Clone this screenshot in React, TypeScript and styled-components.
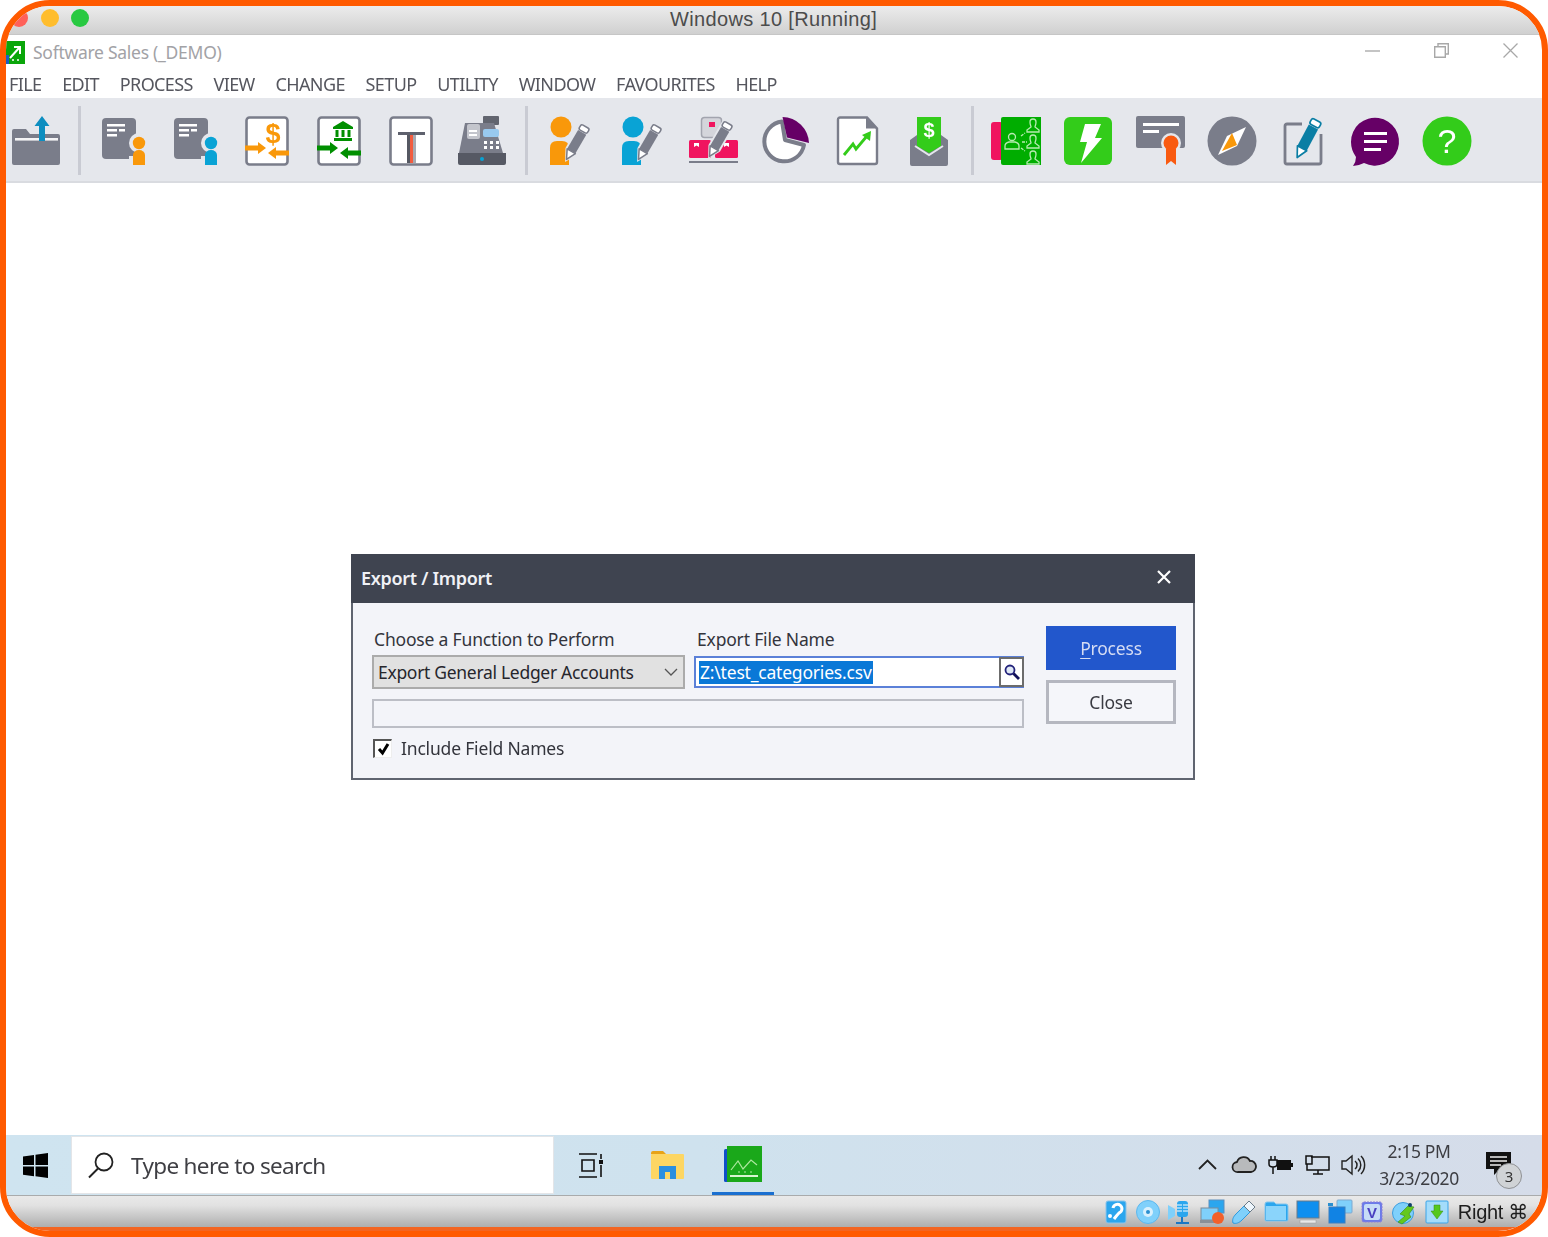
import React from 'react';
import styled, { createGlobalStyle } from 'styled-components';

const GRAY = '#7a7d8a';
const ORANGE = '#f9980a';
const BLUE = '#09a3d5';
const PINK = '#f0145f';
const GREEN = '#33cc1a';
const DGREEN = '#008f00';
const PURPLE = '#660066';
const TB = '#e5e7ec';

const Global = createGlobalStyle`
  html, body { margin: 0; padding: 0; background: #fff; }
  * { box-sizing: border-box; }
  body { font-family: "Noto Sans", "Open Sans", sans-serif; }
`;

const Frame = styled.div`
  width: 1548px; height: 1237px;
  border: 6px solid #ff5a00;
  border-radius: 50px;
  overflow: hidden;
  display: flex; flex-direction: column;
  background: #fff;
  filter: blur(.45px);
`;
const HostBar = styled.div`
  height: 29px; flex: none;
  display: grid; grid-template-columns: 1fr auto 1fr;
  align-items: center;
  padding: 0 5px 0 4px;
  background: linear-gradient(#ececec, #d0d0d0);
  border-bottom: 1px solid #c6c6c6;
`;
const Lights = styled.div`display: flex; gap: 12.5px; margin-top: -4px;`;
const Light = styled.span<{ $c: string }>`
  width: 18px; height: 18px; border-radius: 50%; background: ${p => p.$c};
`;
const HostTitle = styled.div`
  font: 20px "Liberation Sans", Arial, sans-serif;
  color: #4c4c4c; margin-top: -1px; letter-spacing: .35px;
`;
const AppBar = styled.div`
  height: 32px; flex: none; display: flex; align-items: center;
  padding: 2px 24px 0 0;
`;
const AppTitle = styled.div`
  font-size: 17.5px; color: #a2a2a6; margin-left: 8px; letter-spacing: -.27px; flex: 1;
`;
const WinControls = styled.div`display: flex; gap: 54px; margin-top: -4px; align-items: center;`;
const Menu = styled.nav`
  height: 31px; flex: none; display: flex; align-items: center; gap: 20.8px; padding: 3px 0 0 3px;
`;
const MenuItem = styled.span`
  font-size: 18px; color: #55565e; letter-spacing: -.62px;
`;
const Toolbar = styled.div`
  height: 85px; flex: none; display: flex; align-items: center;
  background: ${TB};
  border-bottom: 2px solid #d9dbe0;
`;
const ToolRow = styled.div`display: flex; align-items: center; margin-left: -6px;`;
const ToolSlot = styled.div`
  width: 71.7px; height: 50px; display: flex; justify-content: center; margin-top: 3px;
`;
const ToolSep = styled.div`
  width: 16.3px; height: 69px; display: flex; justify-content: center; margin-top: 2px;
  &::before { content: ''; width: 3px; background: #c9cbd3; }
`;
const Main = styled.main`
  flex: 1; min-height: 0; padding: 371px 2px 0 0; background: #fff;
`;
const Dialog = styled.section`
  width: 844px; height: 226px; margin: 0 auto;
  border: 2px solid #5f6470; border-top: 0;
  background: #f3f4f9;
  display: flex; flex-direction: column;
`;
const DialogHead = styled.header`
  height: 49px; margin: 0 -2px; flex: none; background: #3f4450;
  display: flex; align-items: center; justify-content: space-between;
  padding: 0 24px 4px 10px;
`;
const DialogTitle = styled.h1`
  margin: 3px 0 0; font-size: 18px; font-weight: 600; color: #f0f1f5; letter-spacing: -.3px;
`;
const DialogBody = styled.div`
  flex: 1; display: grid; grid-template-columns: 652px 130px; column-gap: 22px;
  padding: 23px 0 0 19px;
`;
const FormCol = styled.div`display: flex; flex-direction: column; padding-top: 1px;`;
const LabelRow = styled.div`display: grid; grid-template-columns: 323px 1fr; padding-left: 2px; height: 28px;`;
const Label = styled.label`
  font-size: 17.5px; color: #33343c; letter-spacing: -.18px; line-height: 24px;
`;
const FieldRow = styled.div`display: flex; gap: 9px; height: 34px;`;
const SelectBox = styled.div`
  width: 313px; border: 2px solid #ababab; background: #e1e1e1;
  display: flex; align-items: center; justify-content: space-between;
  padding: 0 5px 0 4px; font-size: 17.5px; color: #26262c; letter-spacing: -.3px;
`;
const FileInput = styled.div`
  flex: 1; border: 2px solid #5b80d8; background: #fff; display: flex; align-items: stretch;
  height: 32px; margin-top: 1px; padding-left: 3px;
`;
const InputText = styled.div`flex: 1; display: flex; align-items: center;`;
const Selected = styled.span`
  background: #0a78d7; color: #fff; font-size: 17.5px; letter-spacing: -.2px;
  height: 23px; line-height: 23px; padding: 0 1px;
`;
const SearchBtn = styled.div`
  width: 25px; margin: -1px -2px -1px 0; border: 2px solid #6c6c6c; background: #fff;
  display: flex; align-items: center; justify-content: center;
`;
const BlankField = styled.div`
  height: 29px; margin-top: 10px; border: 2px solid #bcbec6; background: #f3f4f9;
`;
const CheckRow = styled.div`display: flex; align-items: center; gap: 9px; margin-top: 8px; padding-left: 1px;`;
const CheckBox = styled.div`
  width: 19px; height: 19px; background: #fff;
  border-top: 2px solid #555; border-left: 2px solid #555;
  border-right: 1px solid #eee; border-bottom: 1px solid #eee;
  display: flex; align-items: center; justify-content: center;
`;
const ButtonCol = styled.div`display: flex; flex-direction: column; gap: 10px;`;
const Btn = styled.button<{ $primary?: boolean }>`
  height: 44px; padding: 0; font-family: inherit; font-size: 17.5px; letter-spacing: -.2px;
  background: ${p => (p.$primary ? '#2257cc' : '#f5f6fa')};
  color: ${p => (p.$primary ? '#d5dcf3' : '#3a3b42')};
  border: ${p => (p.$primary ? '0' : '3px solid #b5b7c0')};
  u { text-underline-offset: 3px; }
`;
const Taskbar = styled.footer`
  height: 61px; flex: none; display: flex; align-items: stretch;
  background: linear-gradient(90deg, #cfe4f0, #cfe2ee 45%, #d5dce9);
  border-bottom: 1px solid #a9abac;
`;
const StartBtn = styled.div`
  width: 65px; display: flex; align-items: center; justify-content: center; padding-right: 6px;
`;
const SearchBox = styled.div`
  width: 483px; margin: 1px 0; background: #fff; display: flex; align-items: center;
  padding-left: 16px; gap: 17px; border: 1px solid #e3e5e8;
`;
const SearchText = styled.span`font-size: 22.5px; color: #3f3f44; letter-spacing: -.66px; margin-top: 1px;`;
const Apps = styled.div`display: flex; align-items: stretch; margin-left: -1px;`;
const AppBtn = styled.div<{ $active?: boolean }>`
  width: 76px; display: flex; align-items: center; justify-content: center;
  position: relative;
  ${p => p.$active && `
    &::after { content: ''; position: absolute; left: 7px; right: 7px; bottom: 0; height: 3px; background: #1a6fd0; }
  `}
`;
const Tray = styled.div`
  margin-left: auto; display: flex; align-items: center; padding-right: 30px;
`;
const TrayIcons = styled.div`display: flex; align-items: center; gap: 11.5px; margin-top: -1px;`;
const TrayChevron = styled.svg`display: block; flex: none; margin-right: 3px;`;
const Clock = styled.div`
  width: 93px; margin-left: 6.5px; text-align: center; color: #3c3d42; font-size: 17.5px;
  letter-spacing: -.4px; line-height: 27px; margin-top: -1px;
`;
const Notify = styled.div`position: relative; width: 26px; height: 23px; margin-left: 20.5px; margin-top: -4px;`;
const Badge = styled.span`
  position: absolute; left: 10px; top: 11px; width: 26px; height: 26px; border-radius: 50%;
  background: #d0d3d6; border: 1.5px solid #8f9194; color: #333; font-size: 15px;
  display: flex; align-items: center; justify-content: center;
`;
const HostStatus = styled.div`
  height: 31px; flex: none; display: flex; align-items: center; justify-content: flex-end;
  gap: 9px; padding-right: 14px;
  background: linear-gradient(#e9e9e9, #e2e2e2 30%, #aeaeae);
`;
const StatusLabel = styled.span`
  font: 20px "Liberation Sans", "DejaVu Sans", sans-serif; color: #1e1e1e; white-space: nowrap; letter-spacing: -.3px;
`;
const StatusIcons = styled.div`display: flex; gap: 8px; align-items: center;`;
const BottomBand = styled.div`height: 4px; flex: none; background: #f26522;`;

const I = styled.svg`display: block; flex: none; overflow: visible;`;
const SvgText = styled.text<{ $light?: boolean }>`
  font-family: "Liberation Sans", Arial, sans-serif;
  font-weight: ${p => (p.$light ? 400 : 700)};
`;

const Ico = ({ children }: { children: React.ReactNode }) => (
  <I width={50} height={50} viewBox="0 0 50 50">{children}</I>
);

const Pencil = ({ t, body = GRAY, halo = TB }: { t: string; body?: string; halo?: string }) => (
  <g transform={t}>
    <path d="M-7-22h14v32l-7 13-7-13z" fill={halo} />
    <rect x={-5} y={-20} width={10} height={6} rx={2} fill="#fff" stroke={body} strokeWidth={1.6} />
    <rect x={-5} y={-13} width={10} height={23} fill={body} />
    <path d="M-5 10h10l-5 10z" fill="#fff" stroke={body} strokeWidth={1.6} strokeLinejoin="round" />
  </g>
);

const DocPerson = ({ c }: { c: string }) => (
  <Ico>
    <rect x={3} y={2} width={34} height={41} rx={4} fill={GRAY} />
    <path d="M8 8h18v2.5H8zM8 13h10v2.5H8zM20 13h6v2.5h-6zM8 18h10v2.5H8z" fill="#fff" />
    <circle cx={40} cy={27} r={10} fill={TB} />
    <path d="M30 50V40h20v10z" fill={TB} />
    <circle cx={40} cy={27} r={6.2} fill={c} />
    <path d="M34 49V39a6 5 0 0 1 12 0v10z" fill={c} />
  </Ico>
);
const Arrow = ({ x, y, dir, c }: { x: number; y: number; dir: 1 | -1; c: string }) => (
  <path fill={c} transform={`translate(${x} ${y}) scale(${dir} 1)`} d="M0-2.5h13V-6l8 6-8 6v-3.5H0z" />
);
const Box = () => <rect x={4.5} y={1.5} width={41} height={47} rx={3} fill="#fff" stroke={GRAY} strokeWidth={2.6} />;

const tools: React.ReactNode[] = [
  <Ico key="a">
    <path d="M1 15a2 2 0 0 1 2-2h12l4 5h28a2 2 0 0 1 2 2v27a2 2 0 0 1-2 2H3a2 2 0 0 1-2-2z" fill={GRAY} />
    <rect x={4} y={22} width={43} height={2.6} fill="#f4f4f6" />
    <path d="M31 0l7.500 10H34v15h-6V10h-4.500z" fill="#0d8ec0" />
  </Ico>,
  null,
  <DocPerson key="b" c={ORANGE} />,
  <DocPerson key="c" c={BLUE} />,
  <Ico key="d">
    <Box />
    <SvgText x={31} y={27} textAnchor="middle" fontSize={27} fill={ORANGE}>$</SvgText>
    <Arrow x={3} y={32} dir={1} c={ORANGE} />
    <Arrow x={47} y={37} dir={-1} c={ORANGE} />
  </Ico>,
  <Ico key="e">
    <Box />
    <path transform="translate(2 1)" d="M27 4l10 6v2H17v-2zM18 21h18v3H18zM19.500 13h3v7h-3zM25.500 13h3v7h-3zM31.500 13h3v7h-3z" fill={DGREEN} />
    <Arrow x={3} y={32} dir={1} c={DGREEN} />
    <Arrow x={47} y={37} dir={-1} c={DGREEN} />
  </Ico>,
  <Ico key="f">
    <Box />
    <rect x={12} y={16} width={27} height={3} fill="#5e616d" />
    <rect x={21} y={19} width={3} height={28} fill="#555862" />
    <rect x={24} y={19} width={3} height={28} fill="#f25c3f" />
    <rect x={27} y={19} width={3} height={28} fill="#a8aab2" />
  </Ico>,
  <Ico key="g">
    <rect x={26} y={0} width={16} height={9} rx={1} fill="#62656f" />
    <path d="M8 7h29l9 30H2z" fill={GRAY} />
    <rect x={10} y={8} width={13} height={15} rx={2} fill="#c3c5cc" />
    <rect x={12} y={14} width={8} height={2} fill="#fff" />
    <rect x={12} y={18} width={8} height={2} fill="#fff" />
    <rect x={26} y={13} width={16} height={8} rx={2} fill="#98c9ef" />
    <path d="M27 25h3v3h-3zM33 25h3v3h-3zM39 25h3v3h-3zM27 30h3v3h-3zM33 30h3v3h-3zM39 30h3v3h-3z" fill="#fff" />
    <path d="M1 37h48v10a2 2 0 0 1-2 2H3a2 2 0 0 1-2-2z" fill="#565964" />
    <circle cx={25} cy={43} r={2} fill={BLUE} />
  </Ico>,
  null,
  ...[ORANGE, BLUE].map(c => (
    <Ico key={c}>
      <circle cx={16} cy={11} r={10.5} fill={c} />
      <path d="M5 49V32q0-7 7-7h5q7 0 7 7v17z" fill={c} />
      <Pencil t="translate(31 27) rotate(30) scale(.95)" />
    </Ico>
  )),
  <Ico key="i">
    <rect x={12.500} y={1.500} width={20} height={20} rx={3} fill="#d4d5db" stroke="#a2a4ae" strokeWidth={1.5} />
    <rect x={20} y={6} width={6} height={5} fill={PINK} />
    <rect x={0} y={24} width={22} height={18} rx={1.5} fill={PINK} />
    <rect x={26} y={24} width={23} height={18} rx={1.5} fill={PINK} />
    <path d="M5 27h5v4l-2.500-1.500L5 31zM35 27h5v4l-2.500-1.500L35 31z" fill="#fff" />
    <rect x={0} y={45} width={49} height={2} fill={GRAY} />
    <Pencil t="translate(30 24) rotate(30) scale(.95)" />
  </Ico>,
  <Ico key="j">
    <path d="M22 5.500A20 20 0 1 0 44 29L25 24z" fill="#fff" stroke={GRAY} strokeWidth={4} strokeLinejoin="round" />
    <path d="M22.500 1A27 27 0 0 1 49 27L27 21.500z" fill={PURPLE} />
  </Ico>,
  <Ico key="k">
    <path d="M8 1.500h27l10 11V46a2 2 0 0 1-2 2H8a2 2 0 0 1-2-2V3.500a2 2 0 0 1 2-2z" fill="#fff" stroke={GRAY} strokeWidth={2.4} />
    <path d="M34 1.500l11 11H34z" fill={GRAY} />
    <path d="M12 39l9-11 3 5 11-13" fill="none" stroke={GREEN} strokeWidth={2.800} />
    <path d="M39 15l-1 10-8-6z" fill={GREEN} />
  </Ico>,
  <Ico key="l">
    <path d="M6 24l7-5v-3h24v3l7 5v24a2 2 0 0 1-2 2H8a2 2 0 0 1-2-2z" fill={GRAY} />
    <path d="M13 1h24v29L25 37 13 30z" fill={GREEN} />
    <path d="M11 30l14 9 14-9" fill="none" stroke={TB} strokeWidth={2} />
    <SvgText x={25} y={21} textAnchor="middle" fontSize={20} fill="#fff">$</SvgText>
  </Ico>,
  null,
  <Ico key="m">
    <rect x={-1} y={6} width={12} height={38} rx={3} fill={PINK} />
    <path d="M9 3a2 2 0 0 1 2-2h38v48H11a2 2 0 0 1-2-2z" fill="#00ad00" />
    <g fill="none" stroke="#b6ebb0" strokeWidth={1.300}>
      <circle cx={20} cy={21} r={3.500} />
      <path d="M13 33v-3q0-3 4-4h6q4 1 4 4v3z" />
      <path d="M30 26h5M29 20l4-3M29 32l4 3" strokeDasharray="3 1" />
      <path d="M41 3a3 3 0 0 1 3 3c0 3-1 4-1 5l4 3v2h-12v-2l4-3c0-1-1-2-1-5a3 3 0 0 1 3-3z" />
      <path d="M41 19a3 3 0 0 1 3 3c0 3-1 4-1 5l4 3v2h-12v-2l4-3c0-1-1-2-1-5a3 3 0 0 1 3-3z" />
      <path d="M41 35a3 3 0 0 1 3 3c0 3-1 4-1 5l4 3v2h-12v-2l4-3c0-1-1-2-1-5a3 3 0 0 1 3-3z" />
    </g>
  </Ico>,
  <Ico key="n">
    <rect x={1} y={1} width={48} height={48} rx={6} fill={GREEN} />
    <path d="M22 8h16l-6 14h7L18 47l6-21h-7z" fill="#fff" />
  </Ico>,
  <Ico key="o">
    <rect x={1} y={0} width={49} height={32} rx={2} fill={GRAY} />
    <path d="M8 7h36v3H8zM8 14h16v3H8z" fill="#fff" />
    <circle cx={36} cy={27} r={10} fill={TB} />
    <circle cx={36} cy={27} r={7.500} fill="#f95a10" />
    <path d="M31 33h10v16l-5-4-5 4z" fill="#f95a10" />
  </Ico>,
  <Ico key="p">
    <circle cx={25} cy={25} r={24.500} fill={GRAY} />
    <path d="M39 11L30 30 11 39l9-19z" fill="#fff" />
    <path d="M25 17l5 12-15 6z" fill={ORANGE} />
  </Ico>,
  <Ico key="q">
    <path d="M24 8H9a2 2 0 0 0-2 2v36a2 2 0 0 0 2 2h32a2 2 0 0 0 2-2V18" fill="none" stroke={GRAY} strokeWidth={2.800} />
    <Pencil t="translate(29 23) rotate(28) scale(1.05)" body="#0a7ea4" />
  </Ico>,
  <Ico key="r">
    <path d="M1 26a24 24 0 1 1 13 21q-6 3-11 3 3-4 3-9-5-7-5-15z" fill={PURPLE} />
    <path d="M14 16h23v3H14zM14 24h23v3H14zM14 32h17v3H14z" fill="#fff" />
  </Ico>,
  <Ico key="s">
    <circle cx={25} cy={25} r={24.500} fill={GREEN} />
    <SvgText $light x={25} y={37} textAnchor="middle" fontSize={34} fill="#fff">?</SvgText>
  </Ico>,
];

const menuItems = ['FILE', 'EDIT', 'PROCESS', 'VIEW', 'CHANGE', 'SETUP', 'UTILITY', 'WINDOW', 'FAVOURITES', 'HELP'];

const S = ({ children, w = 24 }: { children: React.ReactNode; w?: number }) => (
  <I width={w} height={24} viewBox={`0 0 ${w} 24`}>{children}</I>
);
const LB = '#2ba6ee';
const LBF = '#7fd0fb';
const statusIcons = [
  <S key="1"><rect x={2} y={1} width={20} height={22} rx={2} fill={LB} stroke="#8cc4ea" /><path d="M9 8a4.500 4.500 0 1 1 6 5q-2 2-5 6" fill="none" stroke="#fff" strokeWidth={3} /><circle cx={6} cy={16} r={2} fill="#fff" /></S>,
  <S key="2"><circle cx={12} cy={12} r={11.500} fill={LBF} stroke="#5db8ee" /><circle cx={12} cy={12} r={5} fill="#d9f0fd" /><circle cx={12} cy={12} r={2} fill="#2b8fd0" /></S>,
  <S key="3"><path d="M0 5l7 4v7l-7 4z" fill={LBF} /><rect x={9} y={1} width={11} height={16} rx={3} fill={LB} /><path d="M9 5h5M9 8h5M9 11h5M15 5h5M15 8h5M15 11h5" stroke="#fff" /><path d="M14 17v5M8 23h13" stroke="#1c77c4" strokeWidth={2} /></S>,
  <S key="4"><rect x={9} y={0} width={15} height={13} fill={LB} stroke="#5a8fc0" /><rect x={1} y={8} width={17} height={12} fill={LBF} stroke="#7c8c9a" /><rect x={0} y={20} width={19} height={3} fill="#8a9096" /><circle cx={18} cy={18} r={6} fill="#f2602a" /></S>,
  <S key="5"><path d="M1 23c-1-3 0-6 3-9l8-8 6 6-8 8c-3 3-6 4-9 3z" fill={LBF} stroke="#2b9ae0" /><path d="M12 6l5-5 6 6-5 5z" fill="#eef6fc" stroke="#6a7a88" /></S>,
  <S key="6"><path d="M1 4a2 2 0 0 1 2-2h7l2 2h10a2 2 0 0 1 2 2v14a1 1 0 0 1-1 1H2a1 1 0 0 1-1-1z" fill={LB} stroke="#85c6ee" /><rect x={2} y={6} width={20} height={14} fill="#8ad4fb" /></S>,
  <S key="7"><rect x={1} y={1} width={22} height={17} fill="#0f8fef" stroke="#6b7a88" /><rect x={4} y={20} width={16} height={3} fill="#e8e8e8" stroke="#999" strokeWidth={.5} /></S>,
  <S key="8"><rect x={9} y={0} width={15} height={13} rx={1} fill={LBF} stroke="#7fa9d0" /><rect x={1} y={7} width={16} height={16} fill="#1183e4" stroke="#3a7fc0" /><rect x={0} y={3} width={5} height={3} fill="#2b8fd0" /></S>,
  <S key="9"><rect x={2} y={2} width={20} height={20} rx={2} fill="#6a7bea" stroke="#8c7fd8" strokeDasharray="2 1" /><rect x={4} y={4} width={16} height={16} rx={2} fill="#c7dcf7" /><SvgText x={12} y={18} textAnchor="middle" fontSize={15} fill="#4a3fc0">V</SvgText></S>,
  <S key="10" w={25}><circle cx={11} cy={13} r={10.500} fill={LBF} stroke="#3e9ee0" /><path d="M8 14l8-8 6 1-5 7 2 3-9 7-4-2 7-6z" fill="#64c81e" stroke="#3a8a10" strokeWidth={.6} /><circle cx={18} cy={5} r={2} fill="#10406a" /></S>,
  <S key="11"><rect x={1} y={1} width={22} height={22} rx={1} fill="#a4dcfb" stroke="#3aa4e8" /><path d="M9 5h6v6h3l-6 8-6-8h3z" fill="#55c81e" stroke="#3a8a10" strokeWidth={.5} /></S>,
];

export default function App() {
  let sepKey = 0;
  return (
    <>
      <Global />
      <Frame>
        <HostBar>
          <Lights>
            <Light $c="#ff6159" />
            <Light $c="#ffbd2e" />
            <Light $c="#28c941" />
          </Lights>
          <HostTitle>Windows 10 [Running]</HostTitle>
          <span />
        </HostBar>
        <AppBar>
          <I width={19} height={23} viewBox="0 0 19 23">
            <rect width={19} height={23} fill="#0aa60a" />
            <rect y={14} width={3} height={9} fill="#1b5fc0" />
            <path d="M4 17L13 7M8 6h6v7" fill="none" stroke="#fff" strokeWidth={2} />
            <path d="M6 19h2M11 19h2" stroke="#fff" strokeWidth={1.500} />
          </I>
          <AppTitle>Software Sales (_DEMO)</AppTitle>
          <WinControls>
            <I width={15} height={15} viewBox="0 0 15 15"><path d="M0 8h15" stroke="#b0b0b0" strokeWidth={1.500} /></I>
            <I width={15} height={15} viewBox="0 0 15 15"><path d="M4 3V.7h10.300V11H12M.7 3.700h10.600V14.300H.7z" fill="none" stroke="#a8a8a8" strokeWidth={1.400} /></I>
            <I width={15} height={15} viewBox="0 0 15 15"><path d="M.5.5l14 14M14.500.5l-14 14" stroke="#a8a8a8" strokeWidth={1.300} /></I>
          </WinControls>
        </AppBar>
        <Menu>{menuItems.map(m => <MenuItem key={m}>{m}</MenuItem>)}</Menu>
        <Toolbar>
          <ToolRow>
            {tools.map(t => t
              ? <ToolSlot key={(t as React.ReactElement).key}>{t}</ToolSlot>
              : <ToolSep key={`sep${sepKey++}`} />)}
          </ToolRow>
        </Toolbar>
        <Main>
          <Dialog>
            <DialogHead>
              <DialogTitle>Export / Import</DialogTitle>
              <I width={14} height={14} viewBox="0 0 14 14"><path d="M1 1l12 12M13 1L1 13" stroke="#fff" strokeWidth={2.200} /></I>
            </DialogHead>
            <DialogBody>
              <FormCol>
                <LabelRow>
                  <Label>Choose a Function to Perform</Label>
                  <Label>Export File Name</Label>
                </LabelRow>
                <FieldRow>
                  <SelectBox>
                    Export General Ledger Accounts
                    <I width={14} height={8} viewBox="0 0 14 8"><path d="M1 1l6 6 6-6" fill="none" stroke="#555" strokeWidth={1.300} /></I>
                  </SelectBox>
                  <FileInput>
                    <InputText><Selected>Z:\test_categories.csv</Selected></InputText>
                    <SearchBtn>
                      <I width={16} height={16} viewBox="0 0 16 16">
                        <circle cx={6} cy={6} r={4.500} fill="#dfe8f5" stroke="#22227a" strokeWidth={1.800} />
                        <path d="M9.500 9.500L15 15" stroke="#11115a" strokeWidth={2.800} />
                      </I>
                    </SearchBtn>
                  </FileInput>
                </FieldRow>
                <BlankField />
                <CheckRow>
                  <CheckBox>
                    <I width={13} height={12} viewBox="0 0 13 12"><path d="M2 6l3.500 4L11 1" fill="none" stroke="#000" strokeWidth={3} /></I>
                  </CheckBox>
                  <Label>Include Field Names</Label>
                </CheckRow>
              </FormCol>
              <ButtonCol>
                <Btn $primary><u>P</u>rocess</Btn>
                <Btn>Close</Btn>
              </ButtonCol>
            </DialogBody>
          </Dialog>
        </Main>
        <Taskbar>
          <StartBtn>
            <I width={25} height={25} viewBox="0 0 25 25">
              <path d="M0 3.500l11-1.500v10H0zM12.500 1.800L25 0v12H12.500zM0 13.500h11v9.800L0 21.800zM12.500 13.500H25V25l-12.500-1.700z" fill="#000" />
            </I>
          </StartBtn>
          <SearchBox>
            <I width={26} height={26} viewBox="0 0 26 26">
              <circle cx={16} cy={10} r={8.500} fill="none" stroke="#222" strokeWidth={1.800} />
              <path d="M10 16.500L1 25.500" stroke="#222" strokeWidth={2} />
            </I>
            <SearchText>Type here to search</SearchText>
          </SearchBox>
          <Apps>
            <AppBtn>
              <I width={26} height={25} viewBox="0 0 26 25">
                <path d="M1 1h18M1 24h18M4 7h12v11H4zM23 1v5M23 12v12" fill="none" stroke="#111" strokeWidth={1.600} />
                <rect x={21} y={7} width={4} height={4} fill="#111" />
              </I>
            </AppBtn>
            <AppBtn>
              <I width={33} height={28} viewBox="0 0 33 28">
                <path d="M0 2a2 2 0 0 1 2-2h10l3 3h-15z" fill="#e8a317" />
                <rect y={3} width={33} height={25} rx={1} fill="#fdd663" />
                <path d="M8 28V15h17v13h-6v-7h-5v7z" fill="#2b8fe0" />
              </I>
            </AppBtn>
            <AppBtn $active>
              <I width={38} height={38} viewBox="0 0 38 38">
                <rect x={0} y={3} width={6} height={33} rx={1.500} fill="#1050c8" />
                <rect x={3} y={0} width={35} height={36} fill="#1aa81a" />
                <path d="M7 24l7-9 5 8 8-9 6 5" fill="none" stroke="#aee8a0" strokeWidth={1.200} />
                <path d="M6 30h28" stroke="#d8f5d0" strokeWidth={2} />
                <path d="M14 26h2M20 26h2M26 26h2" stroke="#aee8a0" strokeWidth={1.200} />
              </I>
            </AppBtn>
          </Apps>
          <Tray>
            <TrayIcons>
              <TrayChevron width={19} height={11} viewBox="0 0 19 11"><path d="M1 10l8.500-8.500L18 10" fill="none" stroke="#222" strokeWidth={1.800} /></TrayChevron>
              <I width={25} height={17} viewBox="0 0 25 17">
                <path d="M6 16a5 5 0 0 1-1-10 7 7 0 0 1 13-1 5.500 5.500 0 0 1 1 11z" fill="#b8babc" stroke="#222" strokeWidth={1.800} />
              </I>
              <I width={25} height={18} viewBox="0 0 25 18">
                <path d="M3 0v4M7 0v4M1 4h8v4q0 3-4 3t-4-3zM5 11v7" fill="none" stroke="#111" strokeWidth={1.500} />
                <rect x={9} y={4} width={14} height={10} fill="#111" />
                <rect x={23} y={7} width={2} height={4} fill="#111" />
              </I>
              <I width={25} height={20} viewBox="0 0 25 20">
                <path d="M6 2h18v13H2V9M13 15v4M8 19h10M1 1h6v8H1z" fill="none" stroke="#111" strokeWidth={1.500} />
              </I>
              <I width={25} height={20} viewBox="0 0 25 20">
                <path d="M1 6h4l6-5v18l-6-5H1z" fill="none" stroke="#222" strokeWidth={1.400} />
                <path d="M14 6a5 5 0 0 1 0 8M17 3.500a9 9 0 0 1 0 13M20 1a13 13 0 0 1 0 18" fill="none" stroke="#222" strokeWidth={1.500} />
              </I>
            </TrayIcons>
            <Clock>2:15 PM<br />3/23/2020</Clock>
            <Notify>
              <I width={26} height={24} viewBox="0 0 26 24">
                <path d="M0 0h25v17H14l-6 6v-6H0z" fill="#111" />
                <path d="M4 5h17M4 9h17M4 13h11" stroke="#eee" strokeWidth={1.500} />
              </I>
              <Badge>3</Badge>
            </Notify>
          </Tray>
        </Taskbar>
        <HostStatus>
          <StatusIcons>{statusIcons}</StatusIcons>
          <StatusLabel>Right ⌘</StatusLabel>
        </HostStatus>
        <BottomBand />
      </Frame>
    </>
  );
}
